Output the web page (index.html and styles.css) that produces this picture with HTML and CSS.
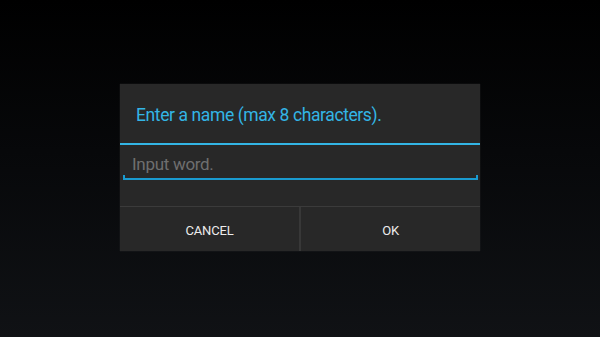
FILE: index.html
```html
<!DOCTYPE html>
<html>
<head>
<meta charset="utf-8">
<link rel="stylesheet" href="styles.css">
</head>
<body>
<div class="screen">
  <div class="dialog">
    <div class="title">Enter a name (max 8 characters).</div>
    <div class="title-rule"></div>
    <div class="content">
      <div class="field">
        <div class="placeholder">Input word.</div>
        <div class="underline"></div>
      </div>
    </div>
    <div class="buttons">
      <div class="btn">CANCEL</div>
      <div class="btn-divider"></div>
      <div class="btn">OK</div>
    </div>
  </div>
</div>
</body>
</html>
```
FILE: styles.css
```css
html, body {
  margin: 0;
  padding: 0;
}
body {
  width: 600px;
  height: 337px;
  overflow: hidden;
  font-family: Roboto, "Noto Sans", sans-serif;
}
.screen {
  width: 600px;
  height: 337px;
  box-sizing: border-box;
  padding-top: 84px;
  background: linear-gradient(to bottom, #000000 0%, #07080a 45%, #101215 100%);
}
.dialog {
  width: 360px;
  margin: 0 auto;
  background: #282828;
  display: flex;
  flex-direction: column;
  box-shadow: 0 0 1px rgba(80, 80, 80, 0.6);
}
.title {
  height: 59px;
  padding-left: 16px;
  display: flex;
  align-items: center;
  color: #33b5e5;
  font-size: 17.5px;
  letter-spacing: -0.4px;
  padding-top: 2px;
  box-sizing: border-box;
}
.title-rule {
  height: 2px;
  background: #33b5e5;
}
.content {
  height: 61px;
  padding: 9px 2px 0 3px;
  box-sizing: border-box;
}
.placeholder {
  height: 21px;
  line-height: 21px;
  padding-left: 9px;
  font-size: 17px;
  letter-spacing: -0.3px;
  color: #6f6f6f;
}
.underline {
  height: 3px;
  border: 2px solid #1a9bd0;
  border-top: none;
}
.buttons {
  height: 45px;
  border-top: 1px solid #3b3b3b;
  box-sizing: border-box;
  display: flex;
}
.btn {
  flex: 1;
  display: flex;
  align-items: center;
  justify-content: center;
  color: #ececec;
  font-size: 13px;
  letter-spacing: -0.2px;
  padding-top: 2px;
}
.btn-divider {
  width: 2px;
  background: #383838;
}
```
